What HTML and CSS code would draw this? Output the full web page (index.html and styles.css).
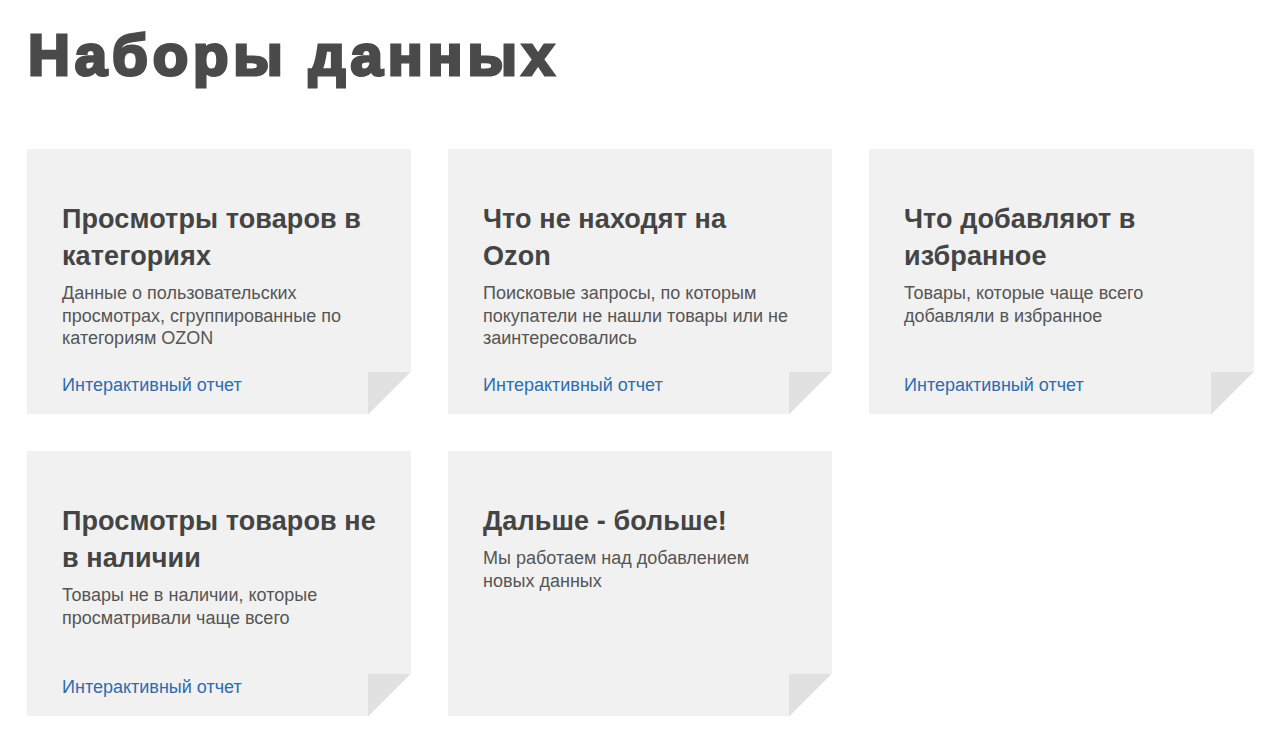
FILE: index.html
```html
<!DOCTYPE html>
<html lang="ru">
<head>
<meta charset="utf-8">
<link rel="stylesheet" href="styles.css">
</head>
<body>
<main class="page">
  <h1 class="title">Наборы данных</h1>
  <div class="grid">
    <div class="card">
      <h2 class="card-title">Просмотры товаров в категориях</h2>
      <p class="card-text">Данные о пользовательских просмотрах, сгруппированные по категориям OZON</p>
      <a class="card-link" href="#">Интерактивный отчет</a>
    </div>
    <div class="card">
      <h2 class="card-title">Что не находят на Ozon</h2>
      <p class="card-text">Поисковые запросы, по которым покупатели не нашли товары или не заинтересовались</p>
      <a class="card-link" href="#">Интерактивный отчет</a>
    </div>
    <div class="card">
      <h2 class="card-title">Что добавляют в избранное</h2>
      <p class="card-text">Товары, которые чаще всего добавляли в избранное</p>
      <a class="card-link" href="#">Интерактивный отчет</a>
    </div>
    <div class="card">
      <h2 class="card-title">Просмотры товаров не в наличии</h2>
      <p class="card-text">Товары не в наличии, которые просматривали чаще всего</p>
      <a class="card-link" href="#">Интерактивный отчет</a>
    </div>
    <div class="card">
      <h2 class="card-title">Дальше - больше!</h2>
      <p class="card-text">Мы работаем над добавлением новых данных</p>
    </div>
  </div>
</main>
</body>
</html>
```

FILE: styles.css
```css
html, body {
  margin: 0;
  padding: 0;
  background: #ffffff;
}

body {
  font-family: "Liberation Sans", Arial, sans-serif;
  color: #4a4a4a;
}

.page {
  padding: 22px 0 0 28px;
}

.title {
  margin: 0;
  font-size: 58px;
  line-height: 66px;
  font-weight: 700;
  color: #4a4a4a;
  -webkit-text-stroke: 3px #4a4a4a;
  letter-spacing: 4.9px;
}

.grid {
  margin-top: 61px;
  margin-left: -1px;
  display: grid;
  grid-template-columns: 384px 384px 385px;
  grid-auto-rows: 265px;
  column-gap: 37px;
  row-gap: 37px;
}

.card {
  position: relative;
  background: #f1f1f1;
  padding: 52px 32px 18px 35px;
  display: flex;
  flex-direction: column;
  box-sizing: border-box;
}

.card::after {
  content: "";
  position: absolute;
  right: 0;
  bottom: 0;
  width: 43px;
  height: 42px;
  background: linear-gradient(to top left, #ffffff 50%, #e1e1e1 50%);
}

.card-title {
  margin: 0;
  font-size: 27px;
  line-height: 37px;
  font-weight: 700;
  color: #444444;
  letter-spacing: 0.1px;
}

.card-text {
  margin: 7px 0 0;
  font-size: 18px;
  line-height: 22.5px;
  color: #555555;
}

.card-link {
  margin-top: auto;
  font-size: 18px;
  line-height: 22px;
  color: #2d6cb0;
  text-decoration: none;
}
```
